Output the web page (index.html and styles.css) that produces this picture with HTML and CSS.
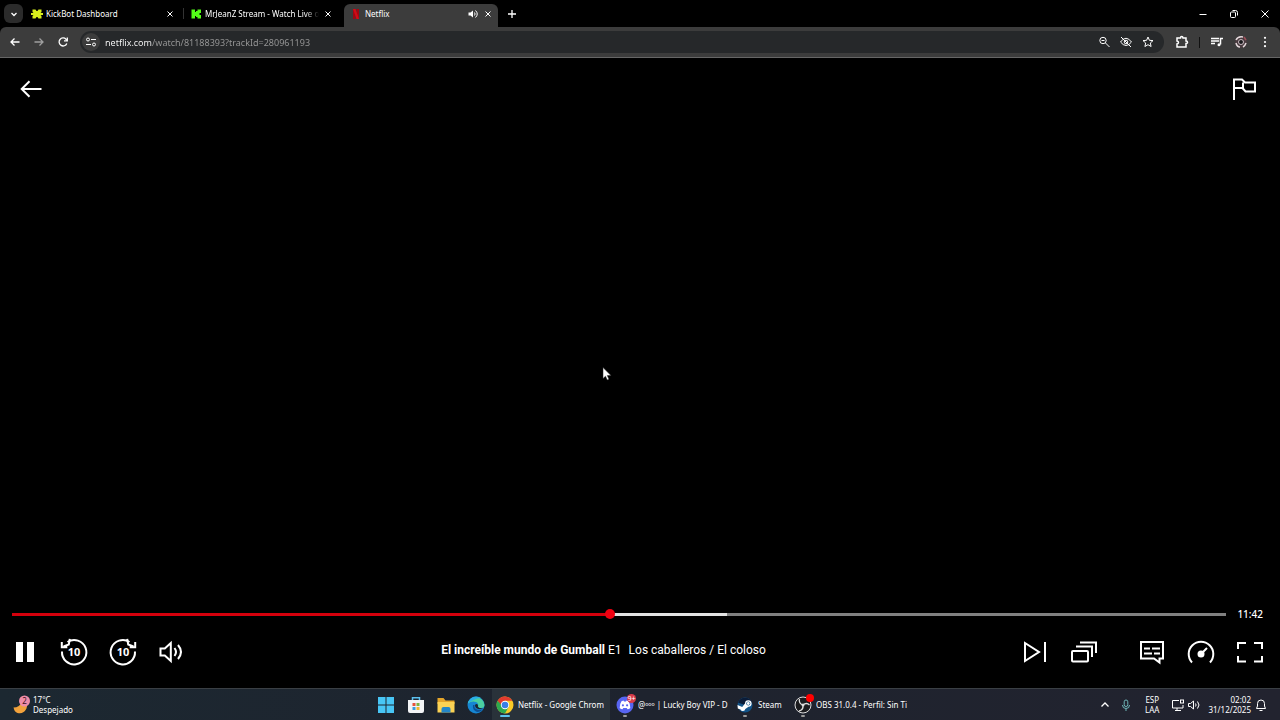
FILE: index.html
```html
<!DOCTYPE html>
<html lang="es">
<head>
    <meta charset="UTF-8">
    <meta name="viewport" content="width=device-width, initial-scale=1.0">
    <title>Netflix</title>
    <link rel="stylesheet" href="styles.css">
</head>
<body>
    <header class="browser">
        <div class="tab-strip">
            <button class="tab-search" aria-label="Buscar pestañas">
                <svg class="icon-s" viewBox="0 0 12 12"><path stroke-width="1.300" d="M3.500 5 6 7.500 8.500 5"/></svg>
            </button>
            <div class="tab">
                <svg class="favicon" viewBox="0 0 12 12"><path fill="#d8f01c" d="M1.500 1.500h3L5.500 3h1l1-1.500h3v2.500L9.500 5H12v2H9.500l1 1v2.500h-3L6.500 9h-1l-1 1.500h-3V8l1-1H0V5h2.500l-1-1z"/></svg>
                <a class="tab-title" href="#">KickBot Dashboard</a>
                <button aria-label="Cerrar"><svg class="icon-s" viewBox="0 0 12 12"><path d="m3.500 3.500 5 5m0-5-5 5"/></svg></button>
            </div>
            <div class="tab tab-divided">
                <svg class="favicon" viewBox="0 0 12 12"><path fill="#53fc18" d="M1.500 1.500H5V4h1V3h1.500V1.500H11V5H9.500v2H11v3.500H7.500V9H6V8H5v2.500H1.500z"/></svg>
                <a class="tab-title tab-fade" href="#">MrJeanZ Stream - Watch Live o</a>
                <button aria-label="Cerrar"><svg class="icon-s" viewBox="0 0 12 12"><path d="m3.500 3.500 5 5m0-5-5 5"/></svg></button>
            </div>
            <div class="tab tab-active">
                <svg class="favicon" viewBox="0 0 12 12"><path fill="#a00612" d="M3 1h2.500v10H3zM6.500 1H9v10H6.500z"/><path fill="#d30a16" d="M3 1h2.500L9 11H6.500z"/></svg>
                <a class="tab-title" href="#">Netflix</a>
                <button aria-label="Silenciar"><svg class="icon-s" viewBox="0 0 12 12"><path fill="#fff" stroke="none" d="M1.500 4.500h2L6 2.500v7l-2.500-2h-2z"/><path d="M7.500 4.500q1.200 1.500 0 3M8.500 2.500q3.500 3.500 0 7"/></svg></button>
                <button aria-label="Cerrar"><svg class="icon-s" viewBox="0 0 12 12"><path d="m3.500 3.500 5 5m0-5-5 5"/></svg></button>
            </div>
            <button class="tab-new" aria-label="Nueva pestaña"><svg class="icon-s" viewBox="0 0 12 12"><path stroke-width="1.300" d="M6 2v8M2 6h8"/></svg></button>
            <div class="window-buttons">
                <button aria-label="Minimizar"><svg class="icon-s" viewBox="0 0 12 12"><path d="M2.500 6.500h7"/></svg></button>
                <button aria-label="Restaurar"><svg class="icon-s" viewBox="0 0 12 12"><rect x="2.500" y="4" width="5" height="5.500" rx="1"/><path d="M4.500 2.500h3q2 0 2 2v3"/></svg></button>
                <button aria-label="Cerrar"><svg class="icon-s" viewBox="0 0 12 12"><path d="m2.500 2.500 7 7m0-7-7 7"/></svg></button>
            </div>
        </div>
        <div class="toolbar">
            <nav class="nav-buttons">
                <button aria-label="Atrás"><svg class="icon-m" viewBox="0 0 14 14"><path stroke-width="1.300" d="M11.500 7H3M6.500 3.500 3 7l3.500 3.500"/></svg></button>
                <button class="dim" aria-label="Adelante"><svg class="icon-m" viewBox="0 0 14 14"><path stroke-width="1.300" d="M2.500 7H11M7.500 3.500 11 7l-3.500 3.500"/></svg></button>
                <button aria-label="Recargar"><svg class="icon-m" viewBox="0 0 14 14"><path stroke-width="1.300" d="M10.800 8.500A4 4 0 1 1 10 4.200L11 5.500"/><path stroke-width="1.300" d="M11.300 2.500v3.300H8"/></svg></button>
            </nav>
            <div class="omnibox">
                <button class="site-info" aria-label="Información del sitio"><svg class="icon-m" viewBox="0 0 14 14"><circle cx="4" cy="4.500" r="1.500"/><path d="M7 4.500h5M2 9.500h5"/><circle cx="10" cy="9.500" r="1.500"/></svg></button>
                <input class="url" type="text" aria-label="Dirección" value="netflix.com/watch/81188393?trackId=280961193">
                <button aria-label="Zoom"><svg class="icon-m" viewBox="0 0 14 14"><circle cx="6" cy="5.500" r="3.200"/><path d="m8.500 8 4 4M4.500 5.500h3"/></svg></button>
                <button aria-label="Cookies bloqueadas"><svg class="icon-m" viewBox="0 0 14 14"><path d="M1.500 7Q7-.5 12.500 7 7 14 1.500 7zM2 2l10 10"/><circle cx="7" cy="7" r="1.800"/></svg></button>
                <button aria-label="Favorito"><svg class="icon-m" viewBox="0 0 14 14"><path d="m7 2 1.400 3.300 3.600.3-2.700 2.400.8 3.500L7 9.700l-3.100 1.800.8-3.500L2 5.600l3.600-.3z"/></svg></button>
            </div>
            <div class="extensions">
                <button aria-label="Extensiones"><svg class="icon-m" viewBox="0 0 14 14"><path stroke-width="1.500" d="M2 3h3.500q0-1.500 1.200-1.500T8 3h3v3q1.500 0 1.500 1.300T11 8.500V12H2V9q1.500-.2 1.500-1.500T2 6z"/></svg></button>
                <span class="toolbar-line"></span>
                <button aria-label="Control multimedia"><svg class="icon-m" viewBox="0 0 14 14"><path stroke-width="1.500" d="M1 3.500h8M1 6h8M1 8.500h4M10.500 9.500V3.500H13"/><circle cx="9" cy="9.700" r="1.500" fill="#fff" stroke="none"/></svg></button>
                <button aria-label="Perfil"><svg class="icon-m" viewBox="0 0 14 14"><circle cx="7" cy="7" r="6" fill="#4a3c40" stroke="none"/><path stroke="#e4d9dc" stroke-width="1.500" d="M2 5q2-4 7-3M2 8q1 4 4 4M9 12q2-1 3-4"/><path stroke="#9d4f59" stroke-width="1.500" d="M10 2l2 3"/><circle cx="7" cy="7" r="2.500" fill="#19191c" stroke="#cbbcc2"/></svg></button>
                <button aria-label="Menú"><svg class="icon-m" viewBox="0 0 14 14"><g fill="#fff" stroke="none"><circle cx="7" cy="2.800" r="1.100"/><circle cx="7" cy="7" r="1.100"/><circle cx="7" cy="11.200" r="1.100"/></g></svg></button>
            </div>
        </div>
    </header>

    <main class="player">
        <div class="player-top">
            <button aria-label="Volver"><svg class="icon-l" viewBox="0 0 30 30"><path d="M25.500 15H6M13.500 7.200 5.700 15l7.800 7.800"/></svg></button>
            <button aria-label="Informar un problema"><svg class="icon-l" viewBox="0 0 30 30"><path d="M5 26V4.500M5 5.500h8l3 3h10v9H16.500l-3-3.500H5M14 8.500V14"/></svg></button>
        </div>

        <svg class="cursor" viewBox="0 0 10 14"><path fill="#fff" stroke="#222" stroke-width=".5" d="M1 .5v11l2.500-2.300 1.700 3.800 1.800-.8-1.700-3.600H9z"/></svg>

        <div class="player-bottom">
            <div class="timeline">
                <input class="seek" type="range" min="0" max="1000" value="492" aria-label="Progreso">
                <span class="time-left">11:42</span>
            </div>
            <div class="controls">
                <div class="control-group">
                    <button aria-label="Pausa"><svg class="icon-l" viewBox="0 0 30 30"><path fill="#fff" stroke="none" d="M6 5h7v20H6zM17 5h7v20h-7z"/></svg></button>
                    <button aria-label="Retroceder 10 segundos"><svg class="icon-l" viewBox="0 0 30 30"><path d="M3 14.500A12.200 12.200 0 1 0 8.500 5"/><path d="M10.800 1.800 9.800 7.500 4.500 9.500M2.800 5v5.300h5.500"/><text x="15" y="19">10</text></svg></button>
                    <button aria-label="Avanzar 10 segundos"><svg class="icon-l" viewBox="0 0 30 30"><path d="M27 14.500A12.200 12.200 0 1 1 21.500 5"/><path d="m19.200 1.800 1 5.700 5.300 2M27.200 5v5.300h-5.500"/><text x="15" y="19">10</text></svg></button>
                    <button aria-label="Volumen"><svg class="icon-l" viewBox="0 0 30 30"><path d="M3.500 11.500h4.300l6-5.500v18l-6-5.500H3.500z"/><path d="M17.500 11q3 4 0 8M21 8q6 7 0 14"/></svg></button>
                </div>
                <p class="video-title"><b>El increíble mundo de Gumball</b> <span class="episode">E1</span><span>Los caballeros / El coloso</span></p>
                <div class="control-group">
                    <button aria-label="Siguiente episodio"><svg class="icon-l" viewBox="0 0 30 30"><path d="M5 6v18l14-9zM25 5v20"/></svg></button>
                    <button class="group-end" aria-label="Episodios"><svg class="icon-l" viewBox="0 0 30 30"><rect x="3" y="14" width="16" height="10.500" rx="1"/><path d="M7 9.500h16V20M11 5.500h16V16"/></svg></button>
                    <button aria-label="Audio y subtítulos"><svg class="icon-l" viewBox="0 0 30 30"><path d="M4 5h22v16.500h-3.500v4L17 21.500H4z"/><path d="M7 11.500h6M15 11.500h8M7 16.500h8M17 16.500h6"/></svg></button>
                    <button aria-label="Velocidad"><svg class="icon-l" viewBox="0 0 30 30"><path d="M6 25.500A12.300 12.300 0 1 1 24 25.500M15 17l6-6"/><circle cx="15" cy="17" r="3.500" fill="#fff" stroke="none"/></svg></button>
                    <button aria-label="Pantalla completa"><svg class="icon-l" viewBox="0 0 30 30"><path d="M3 12V6h8M19 6h8v6M27 19v5.500h-8M11 24.500H3V19"/></svg></button>
                </div>
            </div>
        </div>
    </main>

    <footer class="taskbar">
        <button class="weather">
            <svg class="weather-icon" viewBox="0 0 20 20"><path fill="#f2a23c" d="M1.500 12.500q6 0 9-6 6 1 4 7-3 6-9 4.500-3-1-4-5.500z"/><circle cx="12.500" cy="6" r="5.500" fill="#ef8da8"/><text x="12.500" y="9">2</text></svg>
            <span>17°C<br>Despejado</span>
        </button>
        <nav class="apps">
            <button class="app-icon" aria-label="Inicio"><svg class="icon-app" viewBox="0 0 18 18"><path fill="#48c6f5" d="M1 1h7.500v7.500H1zM9.500 1H17v7.500H9.500zM1 9.500h7.500V17H1zM9.500 9.500H17V17H9.500z"/></svg></button>
            <button class="app-icon" aria-label="Microsoft Store"><svg class="icon-app" viewBox="0 0 18 18"><path fill="none" stroke="#5bc0ee" stroke-width="1.500" d="M5.500 5V1.800h7V5"/><path fill="#f2f4f6" d="M1 4h16v11q0 2-2 2H3q-2 0-2-2z"/><path fill="#e5533d" d="M5.500 7h3v3h-3z"/><path fill="#7bb342" d="M9.500 7h3v3h-3z"/><path fill="#3a9bdc" d="M5.500 11h3v3h-3z"/><path fill="#f3b92b" d="M9.500 11h3v3h-3z"/></svg></button>
            <button class="app-icon" aria-label="Explorador de archivos"><svg class="icon-app" viewBox="0 0 18 18"><path fill="#e5a52a" d="M.5 2h6l2 2.500h9V8H.5z"/><path fill="#fbd254" d="M.5 6h17v10.500H.5z"/><path fill="#2386c8" d="M4.500 16.500V13q0-2 2-2h5q2 0 2 2v3.500z"/></svg></button>
            <button class="app-icon" aria-label="Microsoft Edge"><svg class="icon-app" viewBox="0 0 18 18"><circle cx="9" cy="9" r="8.500" fill="#1686d2"/><path fill="#4bcfa0" d="M.8 7.500A8.500 8.500 0 0 1 17.500 9q0 3-3.500 3-3 0-3-1.500 1-3-2-4.500-4-1.500-8.200 1.500z"/><path fill="#2aaee5" d="M.8 7.500A8.500 8.500 0 0 1 9 .5q3 0 5 1.500Q8 2 .8 7.500z"/><path fill="#0c4f94" d="M6 9q-1 5 4 7 4 0 6-3-3 1.500-6 .5T7.500 9z"/><path fill="#1c2630" d="M8 9q0 3.500 3.500 4 3 .5 5-1l-2 .3q-4.500-.3-3.500-3.300Q9.500 7 8 9z"/></svg></button>
            <button class="app-tile app-current">
                <svg class="icon-app" viewBox="0 0 18 18"><circle cx="9" cy="9" r="8.500" fill="#f9c927"/><path fill="#e33b2e" d="M1.600 4.800A8.500 8.500 0 0 1 16.400 4.800H9L5.400 11z"/><path fill="#2da94f" d="M1.600 4.800A8.500 8.500 0 0 0 9 17.500l3.600-6.400L9 13z"/><circle cx="9" cy="9" r="4.200" fill="#fff"/><circle cx="9" cy="9" r="3.300" fill="#397ee6"/></svg>
                <span class="app-name">Netflix - Google Chrome</span>
            </button>
            <button class="app-tile">
                <span class="app-badged"><svg class="icon-app" viewBox="0 0 18 18"><circle cx="9" cy="9" r="8.500" fill="#5865f2"/><path fill="#fff" d="M5.500 5.200 7.500 4.500l.5 1h2l.5-1 2 .7q2 3 1.800 6.800-1.300 1.200-2.800 1.300l-.8-1.300H7.300l-.8 1.300q-1.500-.1-2.800-1.300-.2-3.800 1.800-6.800z"/><circle cx="6.900" cy="9.300" r="1.100" fill="#5865f2"/><circle cx="11.100" cy="9.300" r="1.100" fill="#5865f2"/></svg><span class="badge">9+</span></span>
                <span class="app-name">@ᵒᵒᵒ | Lucky Boy VIP - D</span>
            </button>
            <button class="app-tile app-short">
                <svg class="icon-app" viewBox="0 0 18 18"><circle cx="9" cy="9" r="7.500" fill="#125387"/><path fill="#0b1c38" d="M2 6.500A7.500 7.500 0 0 1 16 6.500L9 9z"/><path fill="#fff" d="m1.500 9 4.700 2L9 7.500a3.300 3.300 0 1 1 3.500 3.300L9.300 13a2.500 2.500 0 0 1-4.800.5l-2.700-1z"/><circle cx="12.300" cy="7.500" r="2" fill="#125387"/><circle cx="12.300" cy="7.500" r="1.400" fill="#fff"/></svg>
                <span class="app-name">Steam</span>
            </button>
            <button class="app-tile">
                <span class="app-badged"><svg class="icon-app" viewBox="0 0 18 18"><circle cx="9" cy="9" r="8" fill="#1b1b1e" stroke="#ddd"/><path fill="none" stroke="#ddd" stroke-width="1.300" d="M9 9Q4.500 7.500 5.500 3M9 9q3.500-3 6.500 0M9 9q.5 5-4 6"/><circle cx="9" cy="9" r="1.500" fill="#ddd"/></svg><span class="badge badge-dot"></span></span>
                <span class="app-name">OBS 31.0.4 - Perfil: Sin Ti</span>
            </button>
        </nav>
        <div class="tray">
            <button aria-label="Iconos ocultos"><svg class="icon-m" viewBox="0 0 14 14"><path stroke-width="1.300" d="m3.500 8.500 3.500-3.500 3.500 3.500"/></svg></button>
            <button aria-label="Micrófono"><svg class="icon-m" viewBox="0 0 14 14"><g stroke="#6fb6b8"><rect x="5.200" y="2" width="3.600" height="6.500" rx="1.800"/><path d="M3.500 7q0 3.500 3.500 3.500T10.500 7M7 10.500V13"/></g></svg></button>
            <button class="language">ESP<br>LAA</button>
            <button class="quick-settings" aria-label="Red y volumen">
                <svg class="icon-m" viewBox="0 0 14 14"><path d="M8 2.500H1.500V10H12V7M4 12.500h6M6 10v2.500"/><rect x="9.500" y="2" width="3" height="3"/></svg>
                <svg class="icon-m" viewBox="0 0 14 14"><path d="M1.500 5.500h2L6.500 3v8l-3-2.500h-2zM8.500 5.500q1.200 1.500 0 3M10.500 3.500q3 3.500 0 7"/></svg>
            </button>
            <button class="clock">02:02<br>31/12/2025</button>
            <button aria-label="Notificaciones"><svg class="icon-m" viewBox="0 0 14 14"><path d="M2.500 10.500 3.500 8V5.500a3.500 3.500 0 0 1 7 0V8l1 2.500zM5.500 12.500h3"/></svg></button>
        </div>
    </footer>
</body>
</html>
```

FILE: styles.css
```css
:root {
    --chrome: #3c3c3c;
    --omnibox: #26282a;
    --netflix-red: #d4000c;
    --taskbar: #1e242e;
}

* {
    margin: 0;
    padding: 0;
    box-sizing: border-box;
}

body {
    display: flex;
    flex-direction: column;
    min-height: 100vh;
    background-color: #000;
    color: #fff;
    font-family: "Noto Sans", "Open Sans", sans-serif;
    font-size: 8px;
    overflow: hidden;
}

button,
input {
    border: none;
    background: none;
    color: inherit;
    font: inherit;
}

button {
    display: flex;
    align-items: center;
    justify-content: center;
    cursor: pointer;
}

a {
    color: inherit;
    text-decoration: none;
}

svg {
    display: block;
    flex: none;
    fill: none;
    stroke: #fff;
    stroke-width: 1;
}

.icon-s {
    width: 12px;
    height: 12px;
}

.icon-m {
    width: 14px;
    height: 14px;
}

.icon-l {
    width: 30px;
    height: 30px;
    stroke-width: 2;
}

.favicon,
.icon-app,
.weather-icon {
    stroke: none;
}

/* Browser */

.tab-strip {
    display: flex;
    align-items: center;
    height: 27px;
    padding-left: 4px;
}

.tab-search {
    width: 19px;
    height: 19px;
    margin-right: 2px;
    border-radius: 6px;
    background-color: #2b2b2b;
}

.tab {
    display: flex;
    align-items: center;
    gap: 3px;
    width: 158px;
    height: 23px;
    padding: 0 7px 0 6px;
}

.tab-divided {
    height: 11px;
    border-left: 1px solid #333;
}

.tab-active {
    width: 154px;
    height: 23px;
    align-self: flex-end;
    margin-left: 3px;
    padding: 0 4px 4px 6px;
    border-radius: 6px 6px 0 0;
    background-color: var(--chrome);
}

.favicon {
    width: 12px;
    height: 12px;
}

.tab-title {
    flex: 1;
    white-space: nowrap;
}

.tab-fade {
    mask-image: linear-gradient(to right, #000 88%, transparent);
}

.tab-new {
    margin-left: 8px;
}

.window-buttons {
    display: flex;
    margin-left: auto;
}

.window-buttons button {
    width: 31px;
    height: 27px;
}

.toolbar {
    display: flex;
    align-items: center;
    height: 31px;
    border-bottom: 1px solid #666;
    border-radius: 6px 6px 0 0;
    background-color: var(--chrome);
}

.nav-buttons {
    display: flex;
    gap: 10px;
    padding: 0 10px 0 8px;
}

.dim {
    opacity: 0.5;
}

.omnibox {
    display: flex;
    flex: 1;
    align-items: center;
    gap: 8px;
    height: 22px;
    padding: 0 9px 0 2px;
    border-radius: 11px;
    background-color: var(--omnibox);
}

.site-info {
    width: 18px;
    height: 18px;
    border-radius: 50%;
    background-color: var(--chrome);
}

/* host in white, the rest of the address in grey */
.url {
    flex: 1;
    height: 18px;
    margin-left: -3px;
    background-image: linear-gradient(to right, #fff 47px, #9a9a9a 47px);
    background-clip: text;
    color: transparent;
    font-size: 9px;
    outline: none;
}

.extensions {
    display: flex;
    align-items: center;
    gap: 10px;
    padding: 0 8px 0 11px;
}

.toolbar-line {
    width: 1px;
    height: 11px;
    background-color: #111;
}

/* Player */

.player {
    position: relative;
    display: flex;
    flex: 1;
    flex-direction: column;
    justify-content: space-between;
}

.player-top {
    display: flex;
    justify-content: space-between;
    padding: 16px 21px 0 16px;
}

.cursor {
    position: absolute;
    left: 47%;
    top: 49%;
    width: 10px;
    height: 14px;
}

.timeline {
    display: flex;
    align-items: center;
    gap: 11px;
    padding: 0 17px 0 12px;
}

.seek {
    flex: 1;
    height: 10px;
    appearance: none;
    cursor: pointer;
}

.seek::-webkit-slider-runnable-track {
    height: 3px;
    background-image: linear-gradient(to right, var(--netflix-red) 49.2%, #e2e2e2 49.2%, #e2e2e2 58.9%, #808080 58.9%);
}

.seek::-webkit-slider-thumb {
    appearance: none;
    width: 10px;
    height: 10px;
    margin-top: -4px;
    border-radius: 50%;
    background-color: #f00010;
}

.time-left {
    font-size: 10px;
    font-weight: 500;
    line-height: 16px;
}

.controls {
    display: flex;
    align-items: center;
    padding: 15px 15px 21px 10px;
}

.control-group {
    display: flex;
    gap: 19px;
}

.group-end {
    margin-right: 19px;
}

.control-group text {
    fill: #fff;
    stroke: none;
    font-size: 11px;
    font-weight: 700;
    text-anchor: middle;
}

.video-title {
    flex: 1;
    padding-bottom: 4px;
    font-family: Roboto, sans-serif;
    font-size: 12px;
    line-height: 16px;
    text-align: center;
}

.episode {
    margin-right: 7px;
}

/* Taskbar */

.taskbar {
    display: grid;
    grid-template-columns: 1fr auto 1fr;
    height: 32px;
    border-top: 1px solid #3a3f44;
    background-color: var(--taskbar);
    background-image: linear-gradient(to right, #1c2831, #1e232e 50%, #22232f);
}

.weather {
    justify-self: start;
    gap: 1px;
    padding-left: 12px;
    line-height: 10px;
    text-align: left;
}

.weather-icon {
    width: 20px;
    height: 20px;
}

.weather-icon text {
    fill: #401020;
    font-size: 8px;
    text-anchor: middle;
}

.apps {
    display: flex;
    gap: 2px;
}

.app-icon {
    width: 28px;
}

.icon-app {
    width: 18px;
    height: 18px;
}

.app-tile {
    position: relative;
    justify-content: flex-start;
    gap: 4px;
    width: 118px;
    padding-left: 4px;
}

.app-short {
    width: 56px;
}

.app-current {
    padding-right: 6px;
    background-color: #29323a;
}

.app-tile::after {
    content: "";
    position: absolute;
    left: 11px;
    bottom: 3px;
    width: 4px;
    height: 2px;
    border-radius: 1px;
    background-color: #999;
}

.app-current::after {
    left: 8px;
    width: 10px;
    background-color: #5cc2ee;
}

.app-name {
    flex: 1;
    overflow: hidden;
    text-align: left;
    white-space: nowrap;
}

.app-badged {
    position: relative;
}

.badge {
    position: absolute;
    top: -2px;
    right: -2px;
    width: 9px;
    height: 9px;
    border-radius: 50%;
    background-color: #d83a4a;
    font-size: 7px;
    line-height: 9px;
}

.badge-dot {
    width: 8px;
    height: 8px;
    background-color: #f00;
}

.tray {
    display: flex;
    justify-self: end;
    gap: 7px;
    padding-right: 12px;
    line-height: 10px;
}

.language {
    padding: 0 5px;
}

.quick-settings {
    gap: 2px;
}

.clock {
    margin-right: -4px;
    text-align: right;
}
```
